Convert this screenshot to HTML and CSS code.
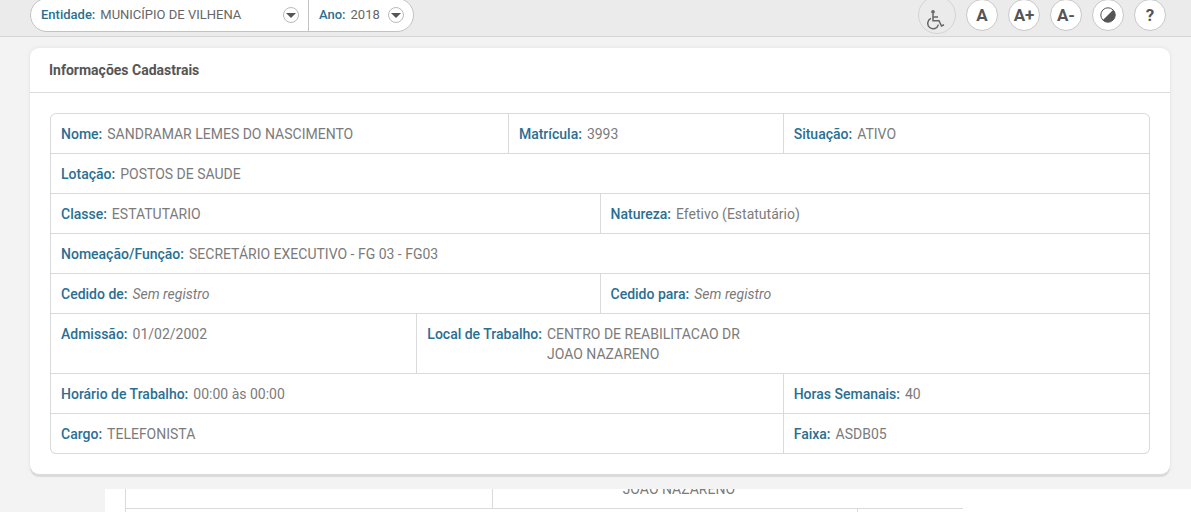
FILE: index.html
```html
<!DOCTYPE html>
<html lang="pt-BR">

<head>
    <meta charset="UTF-8">
    <meta name="viewport" content="width=device-width, initial-scale=1.0">
    <title>Informações Cadastrais</title>
    <link rel="stylesheet" href="styles.css">
</head>

<body>
    <header class="topbar">
        <form class="filters">
            <div class="filter filter-entity">
                <label for="entidade">Entidade:</label>
                <select id="entidade">
                    <option>MUNICÍPIO DE VILHENA</option>
                </select>
                <span class="arrow"></span>
            </div>
            <div class="filter filter-year">
                <label for="ano">Ano:</label>
                <select id="ano">
                    <option>2018</option>
                </select>
                <span class="arrow"></span>
            </div>
        </form>
        <div class="tools">
            <button type="button" class="tool tool-access" aria-label="Acessibilidade">
                <svg width="22" height="20" viewBox="0 0 22 20" fill="none" stroke="#666" stroke-width="1.5">
                    <circle cx="7" cy="1.9" r="1.8" fill="#666" stroke="none" />
                    <path d="M7 3.5 V10.8 H13 L15.5 16 L18 14.8" />
                    <path d="M7 7 H12" />
                    <path d="M5 8.4 A5.4 5.4 0 1 0 12.4 14.6" />
                </svg>
            </button>
            <button type="button" class="tool">A</button>
            <button type="button" class="tool">A+</button>
            <button type="button" class="tool">A-</button>
            <button type="button" class="tool" aria-label="Contraste">
                <svg width="16" height="16" viewBox="0 0 16 16">
                    <circle cx="8" cy="8" r="7.2" fill="#fff" stroke="#555" />
                    <path d="M13.3 2.7 A7.5 7.5 0 0 1 2.7 13.3 Z" fill="#555" />
                </svg>
            </button>
            <button type="button" class="tool">?</button>
        </div>
    </header>

    <main class="content">
        <section class="card">
            <h2 class="card-title">Informações Cadastrais</h2>
            <dl class="info">
                <div class="item col-5"><dt>Nome:</dt><dd>SANDRAMAR LEMES DO NASCIMENTO</dd></div>
                <div class="item col-3"><dt>Matrícula:</dt><dd>3993</dd></div>
                <div class="item col-4"><dt>Situação:</dt><dd>ATIVO</dd></div>

                <div class="item col-12"><dt>Lotação:</dt><dd>POSTOS DE SAUDE</dd></div>

                <div class="item col-6"><dt>Classe:</dt><dd>ESTATUTARIO</dd></div>
                <div class="item col-6"><dt>Natureza:</dt><dd>Efetivo (Estatutário)</dd></div>

                <div class="item col-12"><dt>Nomeação/Função:</dt><dd>SECRETÁRIO EXECUTIVO - FG 03 - FG03</dd></div>

                <div class="item col-6"><dt>Cedido de:</dt><dd class="empty">Sem registro</dd></div>
                <div class="item col-6"><dt>Cedido para:</dt><dd class="empty">Sem registro</dd></div>

                <div class="item col-4"><dt>Admissão:</dt><dd>01/02/2002</dd></div>
                <div class="item col-8"><dt>Local de Trabalho:</dt><dd>CENTRO DE REABILITACAO DR<br>JOAO NAZARENO</dd></div>

                <div class="item col-8"><dt>Horário de Trabalho:</dt><dd>00:00 às 00:00</dd></div>
                <div class="item col-4"><dt>Horas Semanais:</dt><dd>40</dd></div>

                <div class="item col-8"><dt>Cargo:</dt><dd>TELEFONISTA</dd></div>
                <div class="item col-4"><dt>Faixa:</dt><dd>ASDB05</dd></div>
            </dl>
        </section>
    </main>

    <!-- painel seguinte, aparece cortado -->
    <section class="next-panel">
        <div class="next-row">
            <div class="next-cell"></div>
            <div class="next-cell next-text">JOAO NAZARENO</div>
            <div class="next-cell"></div>
        </div>
        <div class="next-row next-row-last">
            <div class="next-cell"></div>
            <div class="next-cell next-split"></div>
            <div class="next-cell"></div>
        </div>
    </section>
</body>

</html>
```
FILE: styles.css
```css
* {
    box-sizing: border-box;
}

body {
    margin: 0;
    background-color: #f4f3f4;
    font-family: Roboto, "Liberation Sans", sans-serif;
    font-size: 14px;
    line-height: 20px;
    color: #7b7b7b;
}

/* topo */
.topbar {
    display: flex;
    align-items: center;
    justify-content: space-between;
    height: 37px;
    padding: 0 25px 6px 30px;
    overflow: hidden;
    background-color: #ecebec;
    border-bottom: 1px solid #d6d5d6;
}

.filters {
    display: flex;
    height: 34px;
    background-color: #fff;
    border: 1px solid #c4c3c4;
    border-radius: 17px;
    font-size: 13px;
}

.filter {
    position: relative;
    display: flex;
    align-items: center;
    gap: 5px;
    padding: 0 10px;
}

.filter-entity {
    width: 278px;
    border-right: 1px solid #c4c3c4;
}

.filter-year {
    width: 104px;
}

.filter label {
    color: #2a6f92;
    font-weight: 500;
}

.filter select {
    flex: 1;
    min-width: 0;
    padding: 0;
    border: 0;
    background: none;
    appearance: none;
    font: inherit;
    color: #666;
}

.arrow {
    position: absolute;
    right: 9px;
    width: 16px;
    height: 16px;
    border: 1px solid #bbb;
    border-radius: 50%;
    pointer-events: none;
}

.arrow::after {
    content: "";
    position: absolute;
    left: 2px;
    top: 5px;
    border: 5px solid transparent;
    border-top-color: #555;
    border-bottom: 0;
}

.tools {
    display: flex;
    align-items: center;
    gap: 10px;
}

.tool {
    display: flex;
    align-items: center;
    justify-content: center;
    width: 32px;
    height: 32px;
    padding: 0;
    border: 1px solid #c9c8c9;
    border-radius: 50%;
    background-color: #fff;
    font-family: inherit;
    font-size: 17px;
    font-weight: 700;
    color: #555;
}

.tool-access {
    width: 38px;
    height: 38px;
    padding-top: 10px;
    background-color: transparent;
    border-color: #d5d4d5;
}

/* cartão */
.content {
    padding: 11px 21px 15px 30px;
}

.card {
    padding-bottom: 20px;
    background-color: #fff;
    border-radius: 9px;
    box-shadow: 0 3px 1px #dadada, 0 0 4px #e2e1e2;
}

.card-title {
    margin: 0;
    padding: 12px 19px;
    border-bottom: 1px solid #dcdddf;
    font-size: 14px;
    line-height: 20px;
    font-weight: 700;
    color: #555;
}

.info {
    display: grid;
    grid-template-columns: repeat(12, 1fr);
    gap: 1px;
    margin: 20px 20px 0;
    overflow: hidden;
    border: 1px solid #d8dadc;
    border-radius: 6px;
    background-color: #d8dadc;
}

.item {
    display: flex;
    gap: 5px;
    padding: 10px 10px 9px;
    background-color: #fff;
}

.item dt {
    color: #2a6f92;
    font-weight: 500;
}

.item dd {
    margin: 0;
}

.item .empty {
    font-style: italic;
}

.col-3 { grid-column: span 3; }
.col-4 { grid-column: span 4; }
.col-5 { grid-column: span 5; }
.col-6 { grid-column: span 6; }
.col-8 { grid-column: span 8; }
.col-12 { grid-column: span 12; }

/* painel cortado */
.next-panel {
    height: 23px;
    margin-left: 105px;
    padding: 0 228px 0 20px;
    overflow: hidden;
    background-color: #fff;
}

.next-row {
    display: grid;
    grid-template-columns: 7fr 7fr 2fr;
    height: 20px;
    border-bottom: 1px solid #d8dadc;
}

.next-cell:first-child {
    border-left: 1px solid #d8dadc;
}

.next-text {
    padding-left: 130px;
    border-left: 1px solid #d8dadc;
    line-height: 1px;
}

.next-split {
    border-right: 1px solid #d8dadc;
}

.next-row-last {
    border-bottom: 0;
}
```
